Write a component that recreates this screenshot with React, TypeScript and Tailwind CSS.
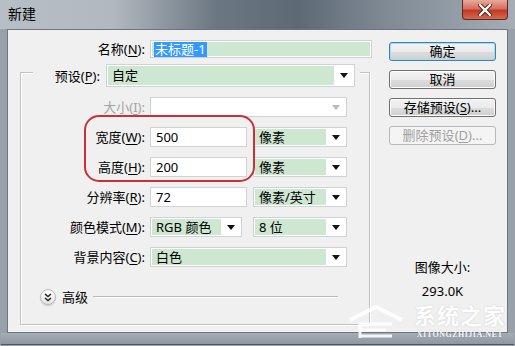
import React from 'react';

const Arrow = ({ disabled }: { disabled?: boolean }) => (
  <svg width="8" height="5" viewBox="0 0 8 5">
    <polygon points="0,0 8,0 4,5" fill={disabled ? '#b8b8b8' : '#111'} />
  </svg>
);

// Labels with a mnemonic letter, e.g. 名称(N):
function Label({ text, k, width, disabled }: { text: string; k: string; width: string; disabled?: boolean }) {
  return (
    <div className={`${width} shrink-0 text-right leading-[20px] ${disabled ? 'text-[#a3a3a3]' : 'text-black'}`}>
      {text}(<span className="underline underline-offset-2">{k}</span>):
    </div>
  );
}

function Combo({ value, width, height = 'h-[20px]', disabled }: { value?: string; width: string; height?: string; disabled?: boolean }) {
  return (
    <div className={`${width} ${height} flex shrink-0 border border-[#d0d3d6] bg-white p-[1px]`}>
      <div className={`flex flex-1 items-center pl-[4px] leading-none ${disabled ? 'bg-white' : 'bg-[#cde7d1]'}`}>{value}</div>
      <div className="flex w-[19px] items-center justify-center bg-white">
        <Arrow disabled={disabled} />
      </div>
    </div>
  );
}

function TextBox({ value, width }: { value: string; width: string }) {
  return (
    <div className={`${width} flex h-[20px] shrink-0 items-center border border-[#d0d3d6] bg-white pl-[5px] leading-none`}>
      {value}
    </div>
  );
}

function Button({ label, k, suffix = '', primary, disabled }: { label: string; k?: string; suffix?: string; primary?: boolean; disabled?: boolean }) {
  const base = 'flex h-[19px] w-[107px] items-center justify-center rounded-[3px] leading-none';
  if (disabled) {
    return (
      <div className={`${base} border border-[#b5b9bc] bg-[#f4f4f4] text-[#a0a0a0]`}>
        {label}(<span className="underline underline-offset-2">{k}</span>){suffix}
      </div>
    );
  }
  return (
    <div
      className={`${base} border ${primary ? 'border-[#3c7fb1] shadow-[inset_0_0_0_1px_#a6dcf6]' : 'border-[#707070] shadow-[inset_0_0_0_1px_#fcfcfc]'} bg-[linear-gradient(180deg,#f2f2f2_0%,#ebebeb_50%,#dddddd_51%,#cfcfcf_100%)]`}
    >
      {k ? (
        <>
          {label}(<span className="underline underline-offset-2">{k}</span>){suffix}
        </>
      ) : (
        label
      )}
    </div>
  );
}

export default function App() {
  return (
    <div className="relative h-[346px] w-[515px] overflow-hidden bg-[#98a1aa] font-['Noto_Sans','Noto_Sans_CJK_SC',sans-serif] text-[13px] text-black">
      {/* title bar */}
      <div className="flex h-[29px] items-start bg-[linear-gradient(90deg,#b7bec5_0%,#b1b8bf_22%,#6b7782_42%,#5d6975_58%,#7f8a95_75%,#a5adb5_100%)]">
        <div className="pl-[8px] pt-[5px] text-[14px] leading-[18px] text-black">新建</div>
        <div className="ml-auto mr-[7px] flex h-[20px] w-[46px] items-center justify-center rounded-b-[4px] border border-t-0 border-[#5b2a24] bg-[linear-gradient(180deg,#e6a99c_0%,#d66f5c_45%,#c23a24_55%,#d46a4f_100%)]">
          <svg width="14" height="12" viewBox="0 0 14 12">
            <path d="M2 1 L12 11 M12 1 L2 11" stroke="#4a1d18" strokeWidth="4" strokeLinecap="round" />
            <path d="M2 1 L12 11 M12 1 L2 11" stroke="#fff" strokeWidth="2.4" strokeLinecap="round" />
          </svg>
        </div>
      </div>

      {/* client area */}
      <div className="mx-[7px] flex h-[304px] border border-[#6c7680] bg-[#f0f0f0]">
        {/* left column */}
        <div className="flex w-[381px] flex-col">
          <div className="mt-[10px] flex h-[18px] items-center">
            <Label text="名称" k="N" width="w-[137px]" />
            <div className="ml-[5px] flex h-[18px] w-[222px] items-center border border-[#cfd2d5] bg-white p-[1px]">
              <div className="flex h-full flex-1 items-center bg-[#cde7d1] pl-[2px]">
                <span className="bg-[#3399ff] px-[1px] leading-[15px] text-white">未标题-1</span>
              </div>
            </div>
          </div>

          {/* group box */}
          <div className="ml-[12px] mt-[14px] flex h-[253px] w-[350px] flex-col border border-[#c3c3c3] shadow-[inset_1px_1px_0_#ffffff,1px_1px_0_#ffffff]">
            <div className="-mt-[9px] ml-[12px] flex h-[23px] w-[327px] items-center bg-[#f0f0f0]">
              <Label text="预设" k="P" width="w-[67px]" />
              <div className="ml-[6px]">
                <Combo value="自定" width="w-[249px]" height="h-[23px]" />
              </div>
            </div>

            <div className="mt-[10px] flex flex-col gap-[10px]">
              <div className="flex h-[20px] items-center">
                <Label text="大小" k="I" width="w-[124px]" disabled />
                <div className="ml-[5px]">
                  <Combo width="w-[197px]" disabled />
                </div>
              </div>
              <div className="flex h-[20px] items-center">
                <Label text="宽度" k="W" width="w-[124px]" />
                <div className="ml-[5px] flex gap-[6px]">
                  <TextBox value="500" width="w-[97px]" />
                  <Combo value="像素" width="w-[94px]" />
                </div>
              </div>
              <div className="flex h-[20px] items-center">
                <Label text="高度" k="H" width="w-[124px]" />
                <div className="ml-[5px] flex gap-[6px]">
                  <TextBox value="200" width="w-[97px]" />
                  <Combo value="像素" width="w-[94px]" />
                </div>
              </div>
              <div className="flex h-[20px] items-center">
                <Label text="分辨率" k="R" width="w-[124px]" />
                <div className="ml-[5px] flex gap-[6px]">
                  <TextBox value="72" width="w-[97px]" />
                  <Combo value="像素/英寸" width="w-[94px]" />
                </div>
              </div>
              <div className="flex h-[20px] items-center">
                <Label text="颜色模式" k="M" width="w-[124px]" />
                <div className="ml-[5px] flex gap-[11px]">
                  <Combo value="RGB 颜色" width="w-[92px]" />
                  <Combo value="8 位" width="w-[94px]" />
                </div>
              </div>
              <div className="flex h-[20px] items-center">
                <Label text="背景内容" k="C" width="w-[124px]" />
                <div className="ml-[5px]">
                  <Combo value="白色" width="w-[197px]" />
                </div>
              </div>
            </div>

            {/* advanced */}
            <div className="ml-[19px] mr-[31px] mt-[21px] flex h-[18px] items-center">
              <div className="flex h-[16px] w-[16px] items-center justify-center rounded-full border border-[#b9b9b9] bg-[linear-gradient(180deg,#ffffff,#e4e4e4)] shadow-[0_1px_1px_#c8c8c8]">
                <svg width="8" height="9" viewBox="0 0 8 9">
                  <path d="M1 1 L4 3.5 L7 1 M1 5 L4 7.5 L7 5" stroke="#222" strokeWidth="1.4" fill="none" />
                </svg>
              </div>
              <span className="ml-[6px] leading-none">高级</span>
              <div className="ml-[5px] h-[2px] flex-1 border-t border-[#b8b8b8] bg-white" />
            </div>
          </div>
        </div>

        {/* right column */}
        <div className="flex w-[107px] flex-col">
          <div className="mt-[12px] flex flex-col gap-[9px]">
            <Button label="确定" primary />
            <Button label="取消" />
            <Button label="存储预设" k="S" suffix="..." />
            <Button label="删除预设" k="D" suffix="..." disabled />
          </div>
          <div className="mt-[114px] flex flex-col items-center gap-[8px] leading-[16px]">
            <span>图像大小:</span>
            <span>293.0K</span>
          </div>
        </div>
      </div>

      {/* bottom frame */}
      <div className="mx-[1px] h-[12px] border-b border-[#4e5760] bg-[linear-gradient(180deg,#a4acb4,#8f98a1)]" />

      {/* red highlight around width / height */}
      <div className="absolute left-[84px] top-[115px] h-[67px] w-[171px] rounded-[15px] border-[2.5px] border-[#c8303a]" />

      {/* watermark */}
      <div className="pointer-events-none absolute left-[346px] top-[304px] flex items-start gap-[8px] opacity-90">
        <svg width="60" height="36" viewBox="0 0 60 36">
          <path d="M4 16 L30 3 L56 16" stroke="#fff" strokeWidth="4" fill="none" />
          <path d="M14 18 V34 M14 20 H46 M14 26 H40 M14 32 H46" stroke="#fff" strokeWidth="3" fill="none" />
        </svg>
        <div className="flex flex-col items-center text-white [text-shadow:0_0_2px_rgba(0,0,0,0.15)]">
          <span className="text-[22px] font-bold leading-[22px] tracking-[1px]">系统之家</span>
          <span className="mt-[4px] font-['Liberation_Serif',serif] text-[8px] font-bold leading-[9px] tracking-[0.5px]">XITONGZHIJIA.NET</span>
        </div>
      </div>
    </div>
  );
}
